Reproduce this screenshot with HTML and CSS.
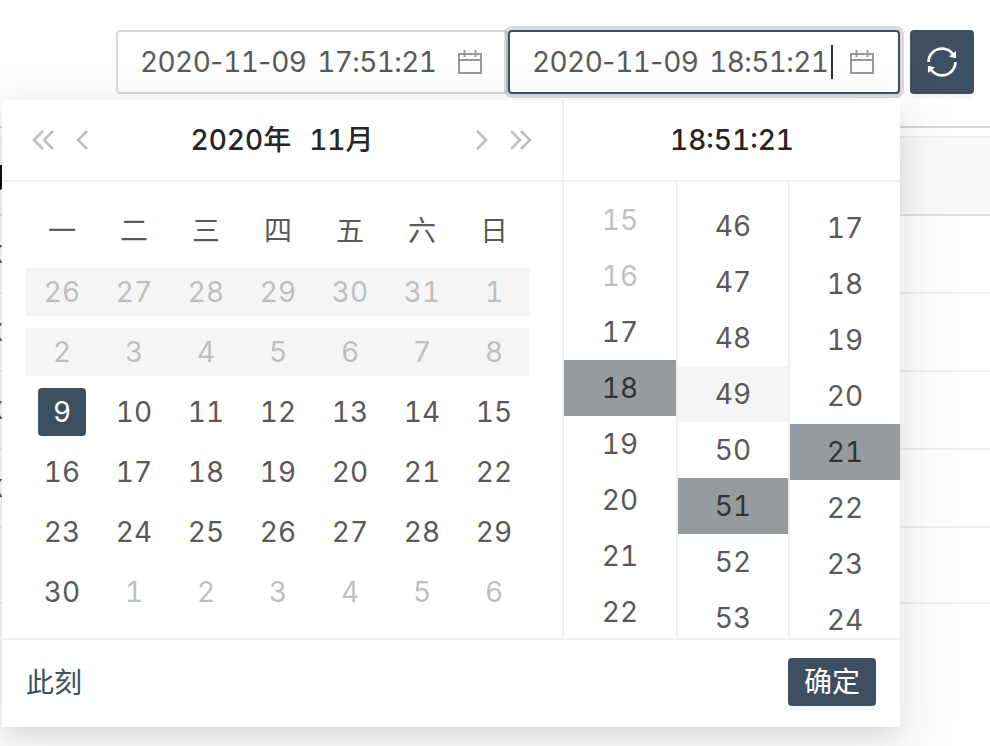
FILE: index.html
```html
<!DOCTYPE html>
<html lang="zh-CN">
<head>
<meta charset="utf-8">
<title>日期时间选择</title>
<link rel="stylesheet" href="styles.css">
</head>
<body>
<div class="toolbar">
  <div class="input">
    <span class="value">2020<span class="hy">-</span>11<span class="hy">-</span>09 17:51:21</span>
    <svg class="cal" viewBox="0 0 26 26"><path d="M2 5h22v19H2zM2 11h22M7.500 1v7M18.500 1v7"/></svg>
  </div>
  <div class="input focus">
    <span class="value">2020<span class="hy">-</span>11<span class="hy">-</span>09 18:51:21</span><i class="caret"></i>
    <svg class="cal" viewBox="0 0 26 26"><path d="M2 5h22v19H2zM2 11h22M7.500 1v7M18.500 1v7"/></svg>
  </div>
  <button class="refresh"><svg viewBox="0 0 1024 1024"><path fill="#fff" d="M168 504.200c1-43.700 10-86.100 26.900-126 17.300-41 42.100-77.700 73.700-109.400S337 212.300 378 195c42.400-17.900 87.400-27 133.900-27s91.500 9.100 133.800 27A341.500 341.500 0 0 1 755 268.800c9.900 9.900 19.200 20.400 27.800 31.400l-60.200 47a8 8 0 0 0 3 14.100l175.700 43c5 1.200 9.900-2.600 9.900-7.700l.8-180.900c0-6.700-7.700-10.500-12.900-6.300l-56.400 44.100C765.800 155.100 646.200 92 511.800 92 282.700 92 96.300 275.600 92 503.800a8 8 0 0 0 8 8.200h60c4.400 0 7.900-3.500 8-7.800zm756 7.800h-60c-4.400 0-7.900 3.500-8 7.800-1 43.700-10 86.100-26.900 126-17.300 41-42.100 77.800-73.700 109.400A342.450 342.450 0 0 1 512.100 856a342.240 342.240 0 0 1-243.200-100.800c-9.900-9.900-19.200-20.400-27.800-31.400l60.200-47a8 8 0 0 0-3-14.100l-175.700-43c-5-1.200-9.900 2.600-9.900 7.700l-.7 181c0 6.700 7.700 10.500 12.900 6.300l56.400-44.100C258.200 868.900 377.800 932 512.200 932c229.200 0 415.500-183.700 419.800-411.800a8 8 0 0 0-8-8.200z"/></svg></button>
</div>

<div class="rule"></div>
<div class="table">
  <div class="thead"><div class="clip"><span class="th">时间</span></div></div>
  <div class="tr"><div class="clip"><span>X</span></div></div>
  <div class="tr"><div class="clip"><span>X</span></div></div>
  <div class="tr"><div class="clip"><span>X</span></div></div>
  <div class="tr"><div class="clip"><span>X</span></div></div>
  <div class="tr last"></div>
</div>

<div class="panel">
  <div class="main">
    <div class="date">
      <div class="head">
        <div class="nav">
          <svg class="ic-double" viewBox="0 0 22 20"><path d="M11 1 2 10l9 9M21 1l-9 9 9 9"/></svg>
          <svg class="ic-single" viewBox="0 0 12 20"><path d="M11 1 2 10l9 9"/></svg>
        </div>
        <div class="title"><span>2020年</span><span>11月</span></div>
        <div class="nav right">
          <svg class="ic-single" viewBox="0 0 12 20"><path d="m1 1 9 9-9 9"/></svg>
          <svg class="ic-double" viewBox="0 0 22 20"><path d="m1 1 9 9-9 9M11 1l9 9-9 9"/></svg>
        </div>
      </div>
      <div class="grid">
        <div class="cell wd">一</div><div class="cell wd">二</div><div class="cell wd">三</div><div class="cell wd">四</div><div class="cell wd">五</div><div class="cell wd">六</div><div class="cell wd">日</div>
        <div class="cell off band"><b>26</b></div><div class="cell off band"><b>27</b></div><div class="cell off band"><b>28</b></div><div class="cell off band"><b>29</b></div><div class="cell off band"><b>30</b></div><div class="cell off band"><b>31</b></div><div class="cell off band"><b>1</b></div>
        <div class="cell off band"><b>2</b></div><div class="cell off band"><b>3</b></div><div class="cell off band"><b>4</b></div><div class="cell off band"><b>5</b></div><div class="cell off band"><b>6</b></div><div class="cell off band"><b>7</b></div><div class="cell off band"><b>8</b></div>
        <div class="cell"><b class="today">9</b></div><div class="cell">10</div><div class="cell">11</div><div class="cell">12</div><div class="cell">13</div><div class="cell">14</div><div class="cell">15</div>
        <div class="cell">16</div><div class="cell">17</div><div class="cell">18</div><div class="cell">19</div><div class="cell">20</div><div class="cell">21</div><div class="cell">22</div>
        <div class="cell">23</div><div class="cell">24</div><div class="cell">25</div><div class="cell">26</div><div class="cell">27</div><div class="cell">28</div><div class="cell">29</div>
        <div class="cell">30</div><div class="cell off">1</div><div class="cell off">2</div><div class="cell off">3</div><div class="cell off">4</div><div class="cell off">5</div><div class="cell off">6</div>
      </div>
    </div>
    <div class="time">
      <div class="time-head">18:51:21</div>
      <div class="cols">
        <div class="col hours">
          <div class="item off">15</div><div class="item off">16</div><div class="item">17</div><div class="item sel">18</div><div class="item">19</div><div class="item">20</div><div class="item">21</div><div class="item">22</div>
        </div>
        <div class="col mins">
          <div class="item">46</div><div class="item">47</div><div class="item">48</div><div class="item hover">49</div><div class="item">50</div><div class="item sel">51</div><div class="item">52</div><div class="item">53</div>
        </div>
        <div class="col secs">
          <div class="item">16</div><div class="item">17</div><div class="item">18</div><div class="item">19</div><div class="item">20</div><div class="item sel">21</div><div class="item">22</div><div class="item">23</div><div class="item">24</div>
        </div>
      </div>
    </div>
  </div>
  <div class="foot">
    <span class="now">此刻</span>
    <button class="ok">确定</button>
  </div>
</div>
</body>
</html>
```

FILE: styles.css
```css
* { box-sizing: border-box; }
html, body { margin: 0; height: 746px; overflow: hidden; background: #fff; }
body {
  position: relative;
  font-family: Inter, "Noto Sans CJK SC", sans-serif;
  font-size: 28px;
  font-variant-numeric: tabular-nums;
  color: #595959;
  opacity: .999;
}

/* toolbar */
.toolbar {
  display: flex;
  justify-content: flex-end;
  padding: 30px 16px 0 0;
}
.input {
  width: 392px;
  height: 64px;
  display: flex;
  align-items: center;
  padding: 0 23px 0 22px;
  background: #fff;
  border: 2px solid #d9d9d9;
  border-radius: 4px;
}
.input.focus {
  position: relative;
  border-color: #3d4f60;
  box-shadow: 0 0 0 4px rgba(61, 79, 96, .2);
}
.value { white-space: nowrap; word-spacing: 4px; letter-spacing: -.6px; }
.hy { font-variant-numeric: normal; letter-spacing: 0; }
.caret {
  width: 2px;
  height: 34px;
  margin-left: 3px;
  background: #333;
}
.cal {
  width: 26px;
  height: 26px;
  margin-left: auto;
  fill: none;
  stroke: #999;
  stroke-width: 2;
}
.refresh {
  width: 64px;
  height: 64px;
  margin-left: 10px;
  padding: 0;
  display: flex;
  align-items: center;
  justify-content: center;
  border: 0;
  border-radius: 4px;
  background: #3d4f60;
  box-shadow: 0 4px 0 rgba(0, 0, 0, .03);
}
.refresh svg { width: 36px; height: 36px; }

/* table behind */
.rule { height: 2px; margin-top: 32px; background: #d9d9d9; }
.table { margin-top: 8px; border-top: 2px solid #f0f0f0; }
.thead {
  height: 78px;
  display: flex;
  align-items: center;
  background: #fafafa;
  border-bottom: 2px solid #e0e0e0;
}
.tr {
  height: 78px;
  display: flex;
  align-items: center;
  border-bottom: 2px solid #f0f0f0;
}
.tr.last { height: 76px; }
.clip {
  width: 2px;
  height: 34px;
  display: flex;
  align-items: center;
  justify-content: flex-end;
  overflow: hidden;
  white-space: nowrap;
  font-size: 24px;
  flex: none;
}
.clip span { flex: none; margin-right: -1px; }
.clip .th { font-size: 28px; font-weight: 700; color: #111; margin-right: -2px; }

/* popup */
.panel {
  position: absolute;
  left: 2px;
  top: 100px;
  width: 898px;
  height: 627px;
  background: #fff;
  box-shadow: 0 6px 12px -8px rgba(0, 0, 0, .12), 0 12px 32px 0 rgba(0, 0, 0, .08), 0 18px 56px 16px rgba(0, 0, 0, .05);
}
.main { display: flex; height: 540px; border-bottom: 2px solid #f0f0f0; }
.date { width: 560px; flex: none; }
.head {
  height: 82px;
  padding: 0 30px;
  display: flex;
  align-items: center;
  justify-content: space-between;
  border-bottom: 2px solid #f0f0f0;
}
.nav { display: flex; align-items: center; gap: 22px; width: 56px; }
.nav svg { fill: none; stroke: #bfbfbf; stroke-width: 2.500; height: 20px; flex: none; }
.ic-double { width: 22px; }
.ic-single { width: 12px; }
.title {
  display: flex;
  gap: 18px;
  margin-top: -4px;
  font-weight: 500;
  color: #262626;
}
.grid {
  display: grid;
  grid-template-columns: repeat(7, 72px);
  grid-auto-rows: 60px;
  padding: 20px 24px 0;
}
.cell {
  display: flex;
  align-items: center;
  justify-content: center;
}
.cell.wd { padding-bottom: 6px; }
.cell b { font-weight: 400; }
.off { color: #bfbfbf; }
.band { background: #f5f5f5; height: 48px; align-self: center; }
.today {
  width: 48px;
  height: 48px;
  display: flex;
  align-items: center;
  justify-content: center;
  color: #fff;
  background: #3d4f60;
  border-radius: 4px;
}

.time { flex: 1; border-left: 2px solid #f0f0f0; display: flex; flex-direction: column; min-width: 0; }
.time-head {
  height: 82px;
  display: flex;
  align-items: center;
  justify-content: center;
  font-weight: 500;
  color: #262626;
  border-bottom: 2px solid #f0f0f0;
}
.cols { flex: 1; display: flex; min-height: 0; }
.col { width: 112px; overflow: hidden; flex: none; }
.col + .col { border-left: 2px solid #f0f0f0; }
.item {
  height: 56px;
  display: flex;
  align-items: center;
  justify-content: center;
}
.hours { padding-top: 10px; }
.mins { padding-top: 16px; }
.secs .item:first-child { margin-top: -38px; }
.item.sel { background: #969b9f; color: #333; }
.item.hover { background: #f5f5f5; }
.item.off { color: #bfbfbf; }

.foot {
  height: 87px;
  padding: 0 24px;
  display: flex;
  align-items: center;
  justify-content: space-between;
}
.now { color: #3d4f60; margin-top: -5px; }
.ok {
  width: 88px;
  height: 48px;
  margin-top: -3px;
  padding: 0 0 4px;
  border: 0;
  border-radius: 4px;
  background: #3d4f60;
  color: #fff;
  font: inherit;
  box-shadow: 0 4px 0 rgba(0, 0, 0, .03);
}
```
